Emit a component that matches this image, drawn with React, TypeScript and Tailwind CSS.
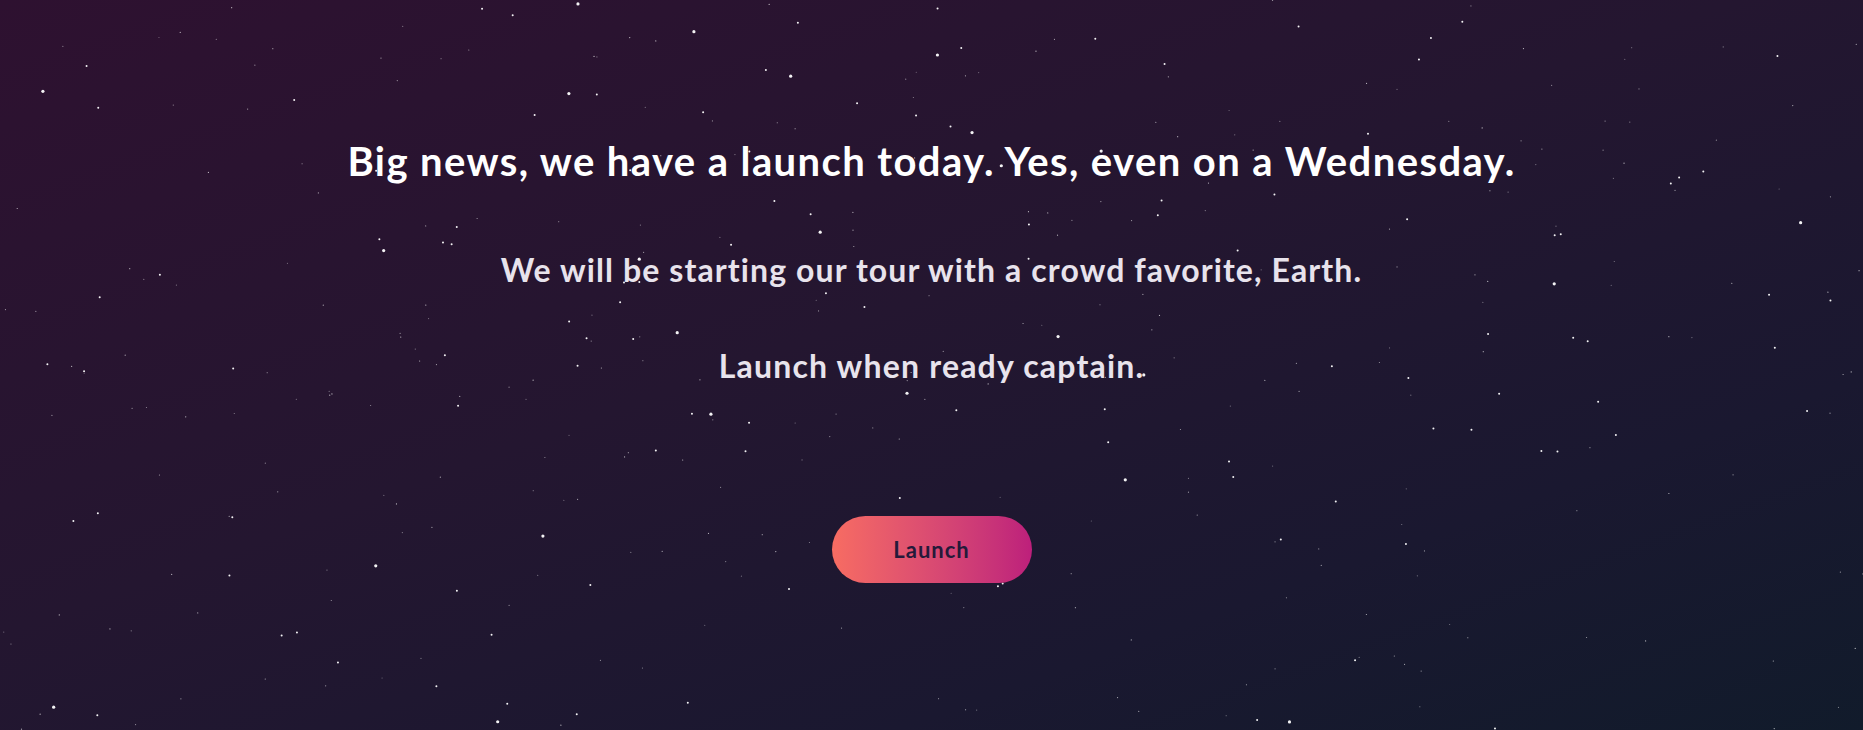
import React from 'react';

// seeded random so the star field is the same on every render
const rand = (() => {
  let s = 1337;
  return () => {
    s = (s * 16807) % 2147483647;
    return (s - 1) / 2147483646;
  };
})();

const stars = Array.from({ length: 420 }, () => {
  const r = rand();
  return {
    x: rand() * 1863,
    y: rand() * 730,
    r: r > 0.93 ? 1.6 : r > 0.7 ? 1 : 0.6,
    o: r > 0.7 ? 0.95 : 0.35 + rand() * 0.4,
  };
});

const StarField: React.FC = () => (
  <svg className="absolute inset-0 w-full h-full" viewBox="0 0 1863 730" preserveAspectRatio="none">
    {stars.map((s, i) => (
      <circle key={i} cx={s.x} cy={s.y} r={s.r} fill="#ffffff" opacity={s.o} />
    ))}
  </svg>
);

const App: React.FC = () => {
  return (
    <div className="relative w-full h-[730px] overflow-hidden bg-[linear-gradient(160deg,#2e1130_0%,#241630_45%,#1a1830_75%,#111b2b_100%)] font-['Lato',sans-serif]">
      <StarField />
      <div className="relative flex flex-col items-center pt-[137px]">
        <h1 className="text-[40px] leading-[48px] font-bold tracking-[1.4px] text-white">
          Big news, we have a launch today. Yes, even on a Wednesday.
        </h1>
        <p className="mt-[66px] text-[32px] leading-[38px] font-bold tracking-[1.1px] text-[#e8e3ec]">
          We will be starting our tour with a crowd favorite, Earth.
        </p>
        <p className="mt-[58px] text-[32px] leading-[38px] font-bold tracking-[1.2px] text-[#e8e3ec]">
          Launch when ready captain.
        </p>
        <button className="mt-[131px] w-[200px] h-[67px] rounded-full bg-gradient-to-r from-[#f76c62] to-[#bd1f7b] text-[22px] font-bold tracking-[1px] text-[#251a3a]">
          Launch
        </button>
      </div>
    </div>
  );
};

export default App;
